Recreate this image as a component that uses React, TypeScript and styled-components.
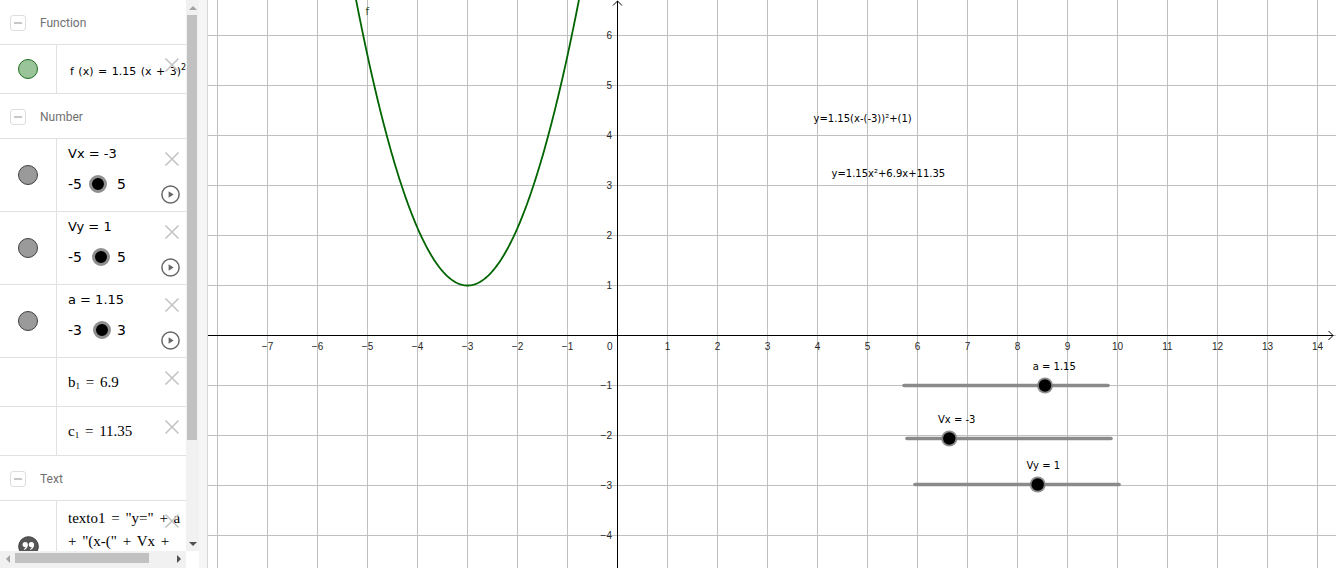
import React from "react";
import styled, { createGlobalStyle } from "styled-components";

const GlobalStyle = createGlobalStyle`
  html, body {
    margin: 0;
    padding: 0;
    background: #fff;
    overflow: hidden;
  }
  body {
    font-family: "DejaVu Sans", sans-serif;
  }
`;

/* ---------- layout ---------- */

const Window = styled.div`
  display: flex;
  width: 1336px;
  height: 568px;
  overflow: hidden;
  background: #fff;
`;

const AlgebraPanel = styled.div`
  flex: none;
  display: grid;
  grid-template-columns: 186px 13px;
  grid-template-rows: 551px 17px;
`;

const AlgebraList = styled.div`
  overflow: hidden;
  background: #fff;
`;

const Splitter = styled.div`
  flex: none;
  width: 8px;
  background: #f6f6f6;
  border-right: 1px solid #d6d6d6;
`;

const GraphicsView = styled.div`
  flex: 1;
  min-width: 0;
  height: 568px;
  background: #fff;
  svg {
    display: block;
  }
`;

/* ---------- algebra view ---------- */

const GroupRow = styled.div`
  display: flex;
  align-items: center;
  gap: 14px;
  height: 45px;
  box-sizing: border-box;
  padding: 2px 0 0 10px;
  border-bottom: 1px solid #e1e1e1;
  font-family: Roboto, "Liberation Sans", sans-serif;
  font-size: 12px;
  color: #707070;
`;

const CollapseBox = styled.span`
  width: 16px;
  height: 16px;
  box-sizing: border-box;
  border: 1px solid #dddddd;
  border-radius: 3px;
  display: flex;
  align-items: center;
  justify-content: center;
  &::before {
    content: "";
    width: 8px;
    height: 2px;
    background: #c8c8c8;
  }
`;

const ItemRow = styled.div<{ $h: number }>`
  display: flex;
  height: ${(p) => p.$h}px;
  box-sizing: border-box;
  border-bottom: 1px solid #e1e1e1;
`;

const MarbleCell = styled.div`
  flex: none;
  width: 56px;
  border-right: 1px solid #e1e1e1;
  display: flex;
  align-items: center;
  justify-content: center;
`;

const Marble = styled.span<{ $fill: string; $ring: string }>`
  width: 20px;
  height: 20px;
  box-sizing: border-box;
  border-radius: 50%;
  background: ${(p) => p.$fill};
  border: 1px solid ${(p) => p.$ring};
`;

const Content = styled.div<{ $center?: boolean }>`
  position: relative;
  flex: 1;
  min-width: 0;
  overflow: hidden;
  padding: ${(p) => (p.$center ? "0" : "6px")} 0 0 11px;
  display: flex;
  flex-direction: column;
  justify-content: ${(p) => (p.$center ? "center" : "flex-start")};
  color: #000;
`;

const FormulaSans = styled.div`
  font-family: "DejaVu Sans", sans-serif;
  font-size: 11px;
  word-spacing: 1px;
  white-space: nowrap;
  padding-left: 2px;
  padding-top: 2px;
  sup {
    font-size: 8px;
  }
`;

const FormulaSerif = styled.div`
  font-family: "Liberation Serif", serif;
  font-size: 15px;
  line-height: 23px;
  word-spacing: 2px;
  white-space: nowrap;
  sub {
    font-size: 9px;
    vertical-align: -2px;
    line-height: 0;
  }
`;

const SliderLabel = styled.div`
  font-size: 13px;
  line-height: 18px;
  white-space: nowrap;
`;

const SliderLine = styled.div`
  display: flex;
  align-items: center;
  height: 24px;
  margin-top: 9px;
  font-size: 14px;
`;

const MiniTrack = styled.div`
  position: relative;
  width: 28px;
  height: 18px;
  margin: 0 3px 0 4px;
`;

const MiniThumb = styled.span`
  position: absolute;
  top: 0;
  width: 18px;
  height: 18px;
  box-sizing: border-box;
  border-radius: 50%;
  background: #000;
  border: 3px solid #8f8f8f;
`;

const DeleteButton = styled.span`
  position: absolute;
  top: 12px;
  right: 6px;
  width: 16px;
  height: 16px;
  svg {
    display: block;
  }
`;

const PlayButton = styled.span`
  position: absolute;
  top: 46px;
  right: 6px;
  width: 19px;
  height: 19px;
  svg {
    display: block;
  }
`;

/* ---------- scrollbars ---------- */

const VScroll = styled.div`
  display: flex;
  flex-direction: column;
  background: #f1f1f1;
`;

const HScroll = styled.div`
  display: flex;
  align-items: flex-start;
  background: #f1f1f1;
  padding-top: 2px;
  box-sizing: border-box;
`;

const Corner = styled.div`
  background: #fff;
`;

const ScrollBtn = styled.div<{ $dir: "up" | "down" | "left" | "right"; $off?: boolean }>`
  flex: none;
  width: ${(p) => (p.$dir === "left" || p.$dir === "right" ? "15px" : "13px")};
  height: ${(p) => (p.$dir === "left" || p.$dir === "right" ? "11px" : "15px")};
  display: flex;
  align-items: center;
  justify-content: center;
  &::before {
    content: "";
    width: 0;
    height: 0;
    ${(p) => {
      const c = p.$off ? "#a3a3a3" : "#505050";
      switch (p.$dir) {
        case "up":
          return `border-left:4px solid transparent;border-right:4px solid transparent;border-bottom:4px solid ${c};`;
        case "down":
          return `border-left:4px solid transparent;border-right:4px solid transparent;border-top:4px solid ${c};`;
        case "left":
          return `border-top:4px solid transparent;border-bottom:4px solid transparent;border-right:4px solid ${c};`;
        default:
          return `border-top:4px solid transparent;border-bottom:4px solid transparent;border-left:4px solid ${c};`;
      }
    }}
  }
`;

const VThumb = styled.div`
  flex: none;
  height: 425px;
  margin: 0 2px 0 1px;
  background: #c1c1c1;
`;

const HThumb = styled.div`
  flex: none;
  width: 134px;
  height: 10px;
  background: #c1c1c1;
`;

const Spacer = styled.div`
  flex: 1;
`;

/* ---------- canvas ---------- */

const AxisLabel = styled.text`
  font-family: "Liberation Sans", Arial, sans-serif;
  font-size: 10px;
  fill: #262626;
`;

const CanvasText = styled.text`
  font-family: "DejaVu Sans", sans-serif;
  font-size: 10px;
  fill: #000;
`;

/* ---------- icons ---------- */

const CrossIcon = () => (
  <svg width="16" height="16" viewBox="0 0 16 16">
    <path d="M1.5 1.5 L14.5 14.5 M14.5 1.5 L1.5 14.5" stroke="#c4c4c4" strokeWidth="1.6" fill="none" />
  </svg>
);

const PlayIcon = () => (
  <svg width="19" height="19" viewBox="0 0 19 19">
    <circle cx="9.5" cy="9.5" r="8.6" stroke="#666" strokeWidth="1.5" fill="#fff" />
    <path d="M7.6 6.2 L12.6 9.5 L7.6 12.8 Z" fill="#666" />
  </svg>
);

const QuoteMarble = () => (
  <svg width="21" height="21" viewBox="0 0 21 21">
    <circle cx="10.5" cy="10.5" r="9.8" fill="#575757" stroke="#3a3a3a" strokeWidth="1" />
    <circle cx="7.2" cy="8.6" r="2.6" fill="#fff" />
    <path d="M9.7 8.6 C9.8 11.4 8.6 13.2 6.1 14 L5.8 13 C7.3 12.4 7.9 11.2 7.6 9.8 Z" fill="#fff" />
    <circle cx="13.4" cy="8.6" r="2.6" fill="#fff" />
    <path d="M15.9 8.6 C16 11.4 14.8 13.2 12.3 14 L12 13 C13.5 12.4 14.1 11.2 13.8 9.8 Z" fill="#fff" />
  </svg>
);

/* ---------- data ---------- */

type SliderItem = { name: string; value: number; min: number; max: number; label: string };

const sliders: SliderItem[] = [
  { name: "Vx", value: -3, min: -5, max: 5, label: "Vx = -3" },
  { name: "Vy", value: 1, min: -5, max: 5, label: "Vy = 1" },
  { name: "a", value: 1.15, min: -3, max: 3, label: "a = 1.15" },
];

const GroupHeader = ({ title }: { title: string }) => (
  <GroupRow>
    <CollapseBox />
    <span>{title}</span>
  </GroupRow>
);

const SliderRow = ({ item }: { item: SliderItem }) => {
  const frac = (item.value - item.min) / (item.max - item.min);
  return (
    <ItemRow $h={73}>
      <MarbleCell>
        <Marble $fill="#9a9a9a" $ring="#404040" />
      </MarbleCell>
      <Content>
        <SliderLabel>{item.label}</SliderLabel>
        <SliderLine>
          <span>{item.min}</span>
          <MiniTrack>
            <MiniThumb style={{ left: 1 + frac * 8 }} />
          </MiniTrack>
          <span>{item.max}</span>
        </SliderLine>
        <DeleteButton>
          <CrossIcon />
        </DeleteButton>
        <PlayButton>
          <PlayIcon />
        </PlayButton>
      </Content>
    </ItemRow>
  );
};

/* ---------- graph ---------- */

const GW = 1128;
const GH = 568;
const OX = 409.5; // page x 617.5
const OY = 335.5;
const U = 50;

const f = (x: number) => 1.15 * (x + 3) * (x + 3) + 1;

const Graph = () => {
  const vLines: number[] = [];
  for (let k = -8; k <= 14; k++) vLines.push(k);
  const hLines: number[] = [];
  for (let k = -4; k <= 6; k++) hLines.push(k);

  const pts: string[] = [];
  for (let x = -5.3; x <= -0.69; x += 0.02) {
    pts.push(`${(OX + U * x).toFixed(2)},${(OY - U * f(x)).toFixed(2)}`);
  }

  const canvasSliders = [
    { x1: 696, x2: 900, y: 385.5, px: 837, label: "a = 1.15", lx: 824.7, ly: 370 },
    { x1: 699, x2: 903, y: 438.5, px: 741.3, label: "Vx = -3", lx: 730, ly: 423 },
    { x1: 707, x2: 911, y: 484.5, px: 829.7, label: "Vy = 1", lx: 818.5, ly: 469 },
  ];

  return (
    <svg width={GW} height={GH} viewBox={`0 0 ${GW} ${GH}`}>
      {vLines.map((k) => (
        <line key={`v${k}`} x1={OX + U * k} y1={0} x2={OX + U * k} y2={GH} stroke="#c0c0c0" strokeWidth="1" />
      ))}
      {hLines.map((k) => (
        <line key={`h${k}`} x1={0} y1={OY - U * k} x2={GW} y2={OY - U * k} stroke="#c0c0c0" strokeWidth="1" />
      ))}

      {/* axes */}
      <line x1={0} y1={OY} x2={GW - 3} y2={OY} stroke="#000" strokeWidth="1" />
      <line x1={OX} y1={1} x2={OX} y2={GH} stroke="#000" strokeWidth="1" />
      <path d={`M${OX - 4.5} 5.5 L${OX} 1 L${OX + 4.5} 5.5`} stroke="#000" strokeWidth="1" fill="none" />
      <path d={`M${GW - 7.5} ${OY - 4.5} L${GW - 3} ${OY} L${GW - 7.5} ${OY + 4.5}`} stroke="#000" strokeWidth="1" fill="none" />

      {vLines
        .filter((k) => k >= -7 && k !== 0)
        .map((k) => (
          <AxisLabel key={`xl${k}`} x={OX + U * k} y={349.5} textAnchor="middle">
            {k < 0 ? `\u2212${-k}` : k}
          </AxisLabel>
        ))}
      <AxisLabel x={OX - 5} y={349.5} textAnchor="end">
        0
      </AxisLabel>
      {hLines
        .filter((k) => k !== 0)
        .map((k) => (
          <AxisLabel key={`yl${k}`} x={OX - 5.5} y={OY - U * k + 3.5} textAnchor="end">
            {k < 0 ? `\u2212${-k}` : k}
          </AxisLabel>
        ))}

      {/* function f */}
      <polyline points={pts.join(" ")} fill="none" stroke="#006400" strokeWidth="1.8" strokeLinejoin="round" />
      <CanvasText x={157.5} y={15} style={{ fill: "#2b4a2b" }}>
        f
      </CanvasText>

      {/* texts */}
      <CanvasText x={605.5} y={121.5}>y=1.15(x-(-3))²+(1)</CanvasText>
      <CanvasText x={623.5} y={177}>y=1.15x²+6.9x+11.35</CanvasText>

      {/* sliders on the canvas */}
      {canvasSliders.map((s) => (
        <g key={s.label}>
          <line x1={s.x1} y1={s.y} x2={s.x2} y2={s.y} stroke="#8a8a8a" strokeWidth="3.6" strokeLinecap="round" />
          <circle cx={s.px} cy={s.y} r={8} fill="#7a7a7a" opacity="0.85" />
          <circle cx={s.px} cy={s.y} r={6.2} fill="#000" />
          <CanvasText x={s.lx} y={s.ly}>
            {s.label}
          </CanvasText>
        </g>
      ))}
    </svg>
  );
};

/* ---------- app ---------- */

export default function App() {
  return (
    <>
      <GlobalStyle />
      <Window>
        <AlgebraPanel>
          <AlgebraList>
            <GroupHeader title="Function" />
            <ItemRow $h={49}>
              <MarbleCell>
                <Marble $fill="#99c499" $ring="#1f6e1f" />
              </MarbleCell>
              <Content $center>
                <FormulaSans>
                  f (x) = 1.15 (x + 3)<sup>2</sup>
                </FormulaSans>
                <DeleteButton>
                  <CrossIcon />
                </DeleteButton>
              </Content>
            </ItemRow>

            <GroupHeader title="Number" />
            {sliders.map((s) => (
              <SliderRow key={s.name} item={s} />
            ))}
            <ItemRow $h={49}>
              <MarbleCell />
              <Content $center>
                <FormulaSerif>
                  b<sub>1</sub> = 6.9
                </FormulaSerif>
                <DeleteButton>
                  <CrossIcon />
                </DeleteButton>
              </Content>
            </ItemRow>
            <ItemRow $h={49}>
              <MarbleCell />
              <Content $center>
                <FormulaSerif>
                  c<sub>1</sub> = 11.35
                </FormulaSerif>
                <DeleteButton>
                  <CrossIcon />
                </DeleteButton>
              </Content>
            </ItemRow>

            <GroupHeader title="Text" />
            <ItemRow $h={92}>
              <MarbleCell>
                <QuoteMarble />
              </MarbleCell>
              <Content>
                <FormulaSerif>texto1 = "y=" + a</FormulaSerif>
                <FormulaSerif>+ "(x-(" + Vx +</FormulaSerif>
                <DeleteButton>
                  <CrossIcon />
                </DeleteButton>
              </Content>
            </ItemRow>
          </AlgebraList>

          <VScroll>
            <ScrollBtn $dir="up" $off />
            <VThumb />
            <Spacer />
            <ScrollBtn $dir="down" />
          </VScroll>
          <HScroll>
            <ScrollBtn $dir="left" $off />
            <HThumb />
            <Spacer />
            <ScrollBtn $dir="right" />
          </HScroll>
          <Corner />
        </AlgebraPanel>
        <Splitter />
        <GraphicsView>
          <Graph />
        </GraphicsView>
      </Window>
    </>
  );
}
